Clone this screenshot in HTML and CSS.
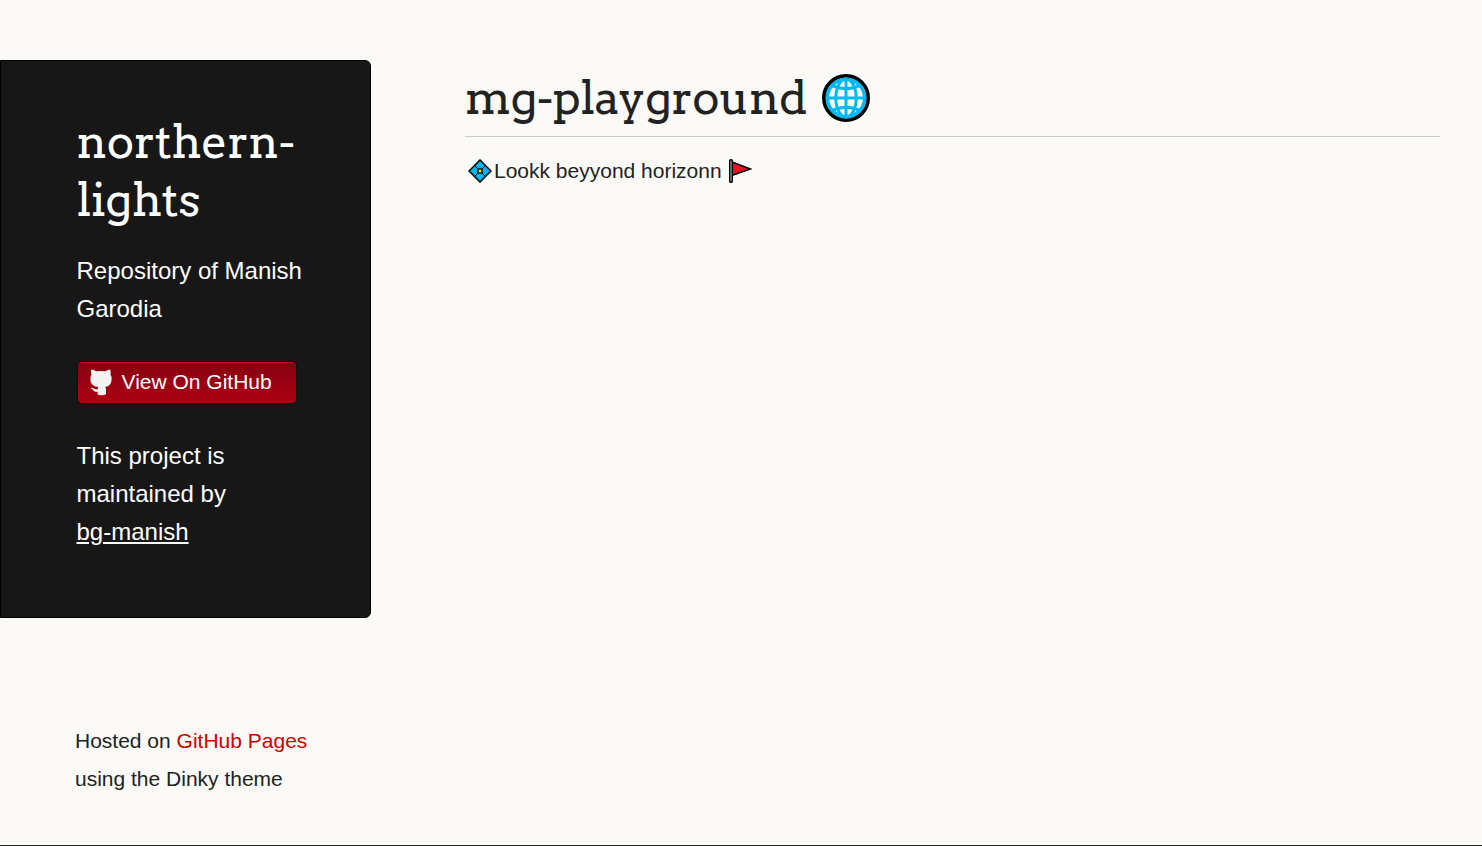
FILE: index.html
```html
<!DOCTYPE html>
<html lang="en">
<head>
<meta charset="utf-8">
<title>northern-lights</title>
<link rel="stylesheet" href="styles.css">
</head>
<body>
<div class="wrapper">
  <aside class="side">
    <header class="panel">
      <h1 class="brand">northern-<br>lights</h1>
      <p class="about">Repository of Manish Garodia</p>
      <a class="button" href="#">
        <svg class="cat" viewBox="0 0 24 28" aria-hidden="true"><path fill="#f5f2f2" d="M2.2 1.500C4 1.400 5.800 2.500 7 3.300Q12 2.500 16.500 3.300Q19 1.500 21.200 1.500Q22.300 4 21.500 6.500Q23 8.500 22.600 12C22 16.500 20 18.300 16 19Q17.300 20 17 22V26Q15 27.500 12.500 27.200Q9.500 27.500 8.600 26V23.800C5 24.500 4.500 22 1.500 19.800C4.500 19.300 5 22 8.700 21.200Q8.800 19.700 9.200 19C5 18.600 2.100 16.500 1.400 12.500Q1 8.500 2.500 6.500Q1.500 3.500 2.200 1.500Z"/></svg>
        <span>View On GitHub</span>
      </a>
      <p class="owner">This project is maintained by <a href="#">bg-manish</a></p>
    </header>
    <footer class="credits">Hosted on <a href="#">GitHub Pages</a><br>using the Dinky theme</footer>
  </aside>
  <main class="content">
    <h1 class="title"><span>mg-playground</span>
      <svg class="globe" viewBox="0 0 48 48" aria-hidden="true"><circle cx="24" cy="24" r="22.100" fill="#fff" stroke="#000" stroke-width="3.800"/><g fill="none" stroke="#00b9f1" stroke-width="3"><circle cx="24" cy="24" r="18.700" stroke-width="3.600"/><ellipse cx="24" cy="24" rx="10.200" ry="19"/><path d="M24 4v40M4 24h40M9 11Q24 18.500 39 11M9 37Q24 29.500 39 37"/></g></svg>
    </h1>
    <p class="tagline">
      <svg class="gem" viewBox="0 0 24 24" aria-hidden="true"><path d="M12 1L23 12L12 23L1 12Z" fill="#00b4f0" stroke="#000" stroke-width="1.500"/><path d="M6.500 6.500L10 10M17.500 6.500L14 10M6.500 17.500L10 14M17.500 17.500L14 14" stroke="#000" stroke-width="1"/><rect x="10" y="10" width="4" height="4" fill="#fff100" stroke="#000" stroke-width="1.300"/></svg>
      <span>Lookk beyyond horizonn</span>
      <svg class="flag" viewBox="0 0 24 26" aria-hidden="true"><path d="M4 4L22.500 11L4 17.500Z" fill="#e81224" stroke="#000" stroke-width="1.400"/><rect x="1.700" y="1.700" width="2.600" height="22.600" rx="1" fill="#aaa" stroke="#000" stroke-width="1.400"/></svg>
    </p>
  </main>
</div>
</body>
</html>
```
FILE: styles.css
```css
* { box-sizing: border-box; }
body {
  margin: 0;
  height: 846px;
  overflow: hidden;
  border-bottom: 1px solid #222;
  background: #fbfaf7;
  color: #222;
  font: 21px/38px "Liberation Sans", Arial, sans-serif;
}
.wrapper { display: flex; padding: 60px 42px 0 0; }
.side { width: 371px; flex: none; }
.panel {
  height: 558px;
  padding: 52px 60px 0 75.500px;
  background: #171717;
  border: 1px solid #000;
  border-radius: 0 6px 6px 0;
  color: #fff;
  font-size: 24px;
}
h1 { margin: 0; font-family: Arvo, "DejaVu Serif", serif; font-weight: 400; }
.brand { font-size: 46px; line-height: 58px; letter-spacing: -0.500px; }
.about { margin: 23px 0 33px; }
.button {
  display: flex;
  align-items: center;
  width: 220px;
  height: 43px;
  padding: 0 0 2px 11px;
  gap: 9px;
  border: 1px solid #0d0d0d;
  border-radius: 5px;
  background: linear-gradient(#85000f, #ad0014);
  box-shadow: inset 0 1px 1px #c8102a;
  color: #fff;
  font-size: 21px;
  text-decoration: none;
}
.cat { width: 24px; height: 28px; }
.owner { margin: 33px 0 0; width: 190px; }
.owner a { color: #fff; }
.credits { padding: 104px 0 0 75px; }
.credits a { color: #c00; text-decoration: none; }
.content { flex: 1; margin-left: 94px; }
.title {
  display: flex;
  align-items: center;
  gap: 15.500px;
  height: 77px;
  border-bottom: 1px solid #ccc;
  font-size: 46px;
  line-height: 76px;
  letter-spacing: -0.600px;
}
.globe { width: 48px; height: 48px; }
.tagline { display: flex; align-items: center; margin: 15px 0 0 2.500px; }
.gem { width: 24px; height: 24px; margin-right: 2.500px; }
.flag { width: 24px; height: 26px; margin-left: 6.500px; }
```
